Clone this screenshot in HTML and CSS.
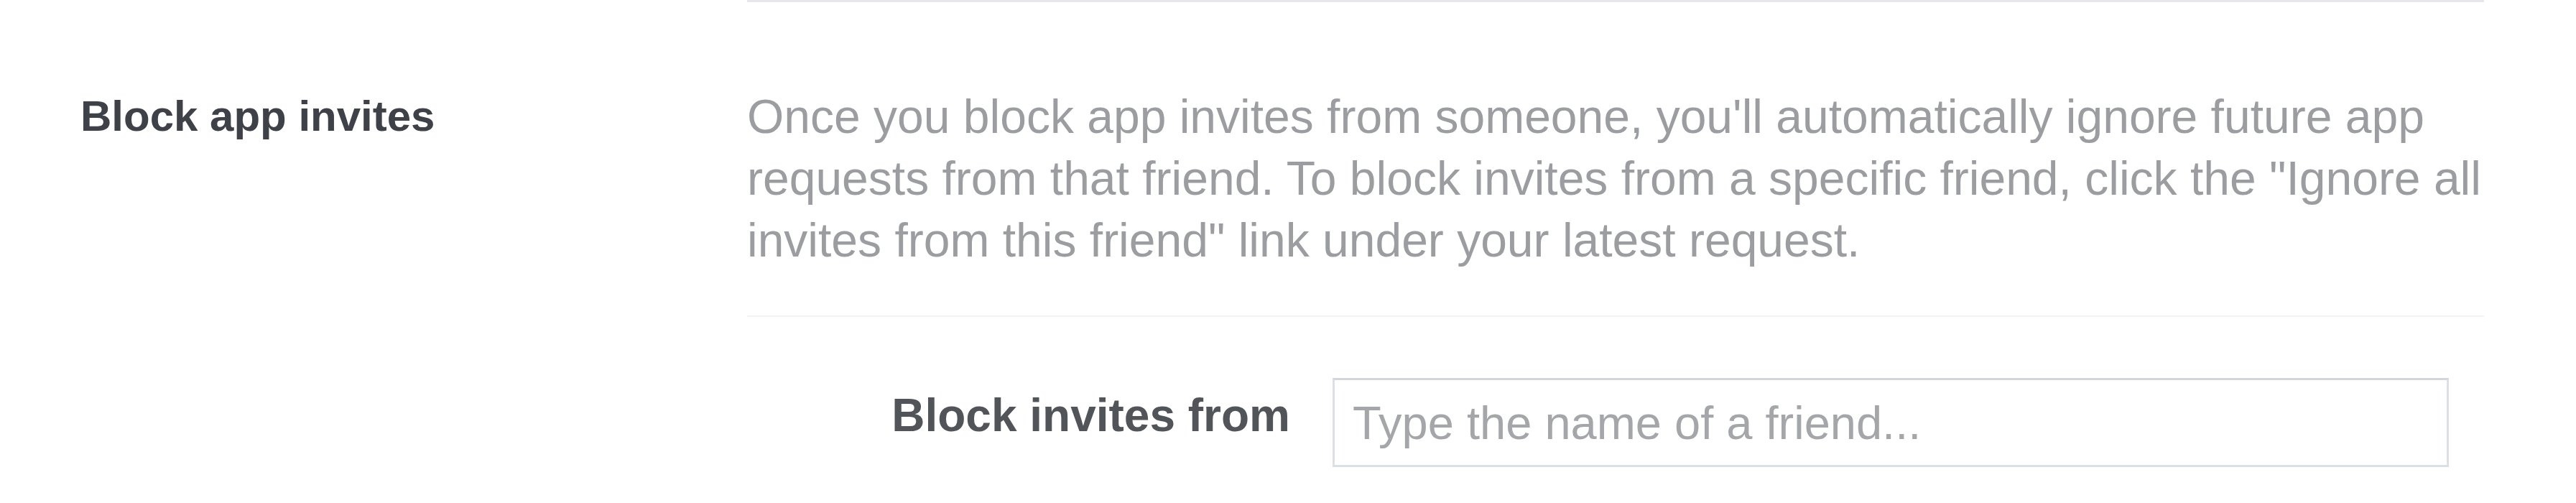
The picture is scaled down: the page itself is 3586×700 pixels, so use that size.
FILE: index.html
```html
<!DOCTYPE html>
<html lang="en">
<head>
    <meta charset="UTF-8">
    <title>Block app invites</title>
    <link rel="stylesheet" href="styles.css">
</head>
<body>
    <div class="setting">
        <div class="setting-label">Block app invites</div>
        <div class="setting-body">
            <p class="setting-desc">Once you block app invites from someone, you'll automatically ignore future app requests from that friend. To block invites from a specific friend, click the "Ignore all invites from this friend" link under your latest request.</p>
            <div class="block-row">
                <label for="blockInvites">Block invites from</label>
                <input type="text" id="blockInvites" placeholder="Type the name of a friend...">
            </div>
        </div>
    </div>
</body>
</html>
```

FILE: styles.css
```css
body { margin: 0; background: #fff; font-family: "Liberation Sans", Arial, sans-serif; }
.setting { display: grid; grid-template-columns: 928px 2418px; padding-left: 112px; }
.setting-label { padding-top: 119px; font-size: 60px; line-height: 86px; font-weight: bold; color: #3e4147; }
.setting-body { border-top: 3px solid #e6e7ea; }
/* text runs a hair past the rule on the right, like the original */
.setting-desc { margin: 116px -24px 0 0; padding-bottom: 62px; font-size: 66px; line-height: 86px; color: #9b9da1; }
.block-row { display: grid; grid-template-columns: 1fr 1554px; column-gap: 59px; align-items: center; padding: 85px 49px 0 0; border-top: 2px solid #f1f2f4; }
.block-row label { text-align: right; padding-bottom: 20px; font-size: 64px; font-weight: bold; color: #515459; }
.block-row input { box-sizing: border-box; height: 124px; padding: 0 25px; border: 3px solid #dcdfe4; border-top-color: #d2d5da; font-family: "Liberation Sans", Arial, sans-serif; font-size: 65px; color: #333; outline: none; }
.block-row input::placeholder { color: #a4a6aa; }
```
